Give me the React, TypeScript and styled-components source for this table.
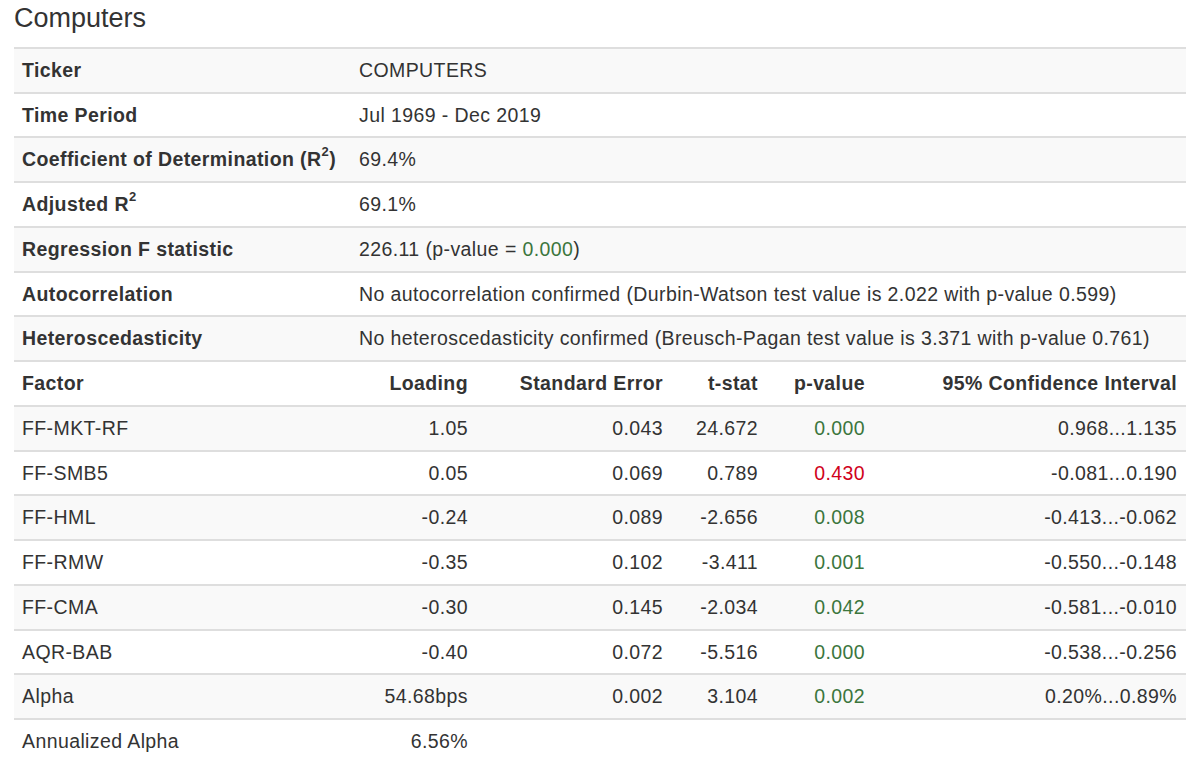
import React from "react";
import styled, { createGlobalStyle } from "styled-components";

const Global = createGlobalStyle`
  html, body { margin: 0; padding: 0; background: #fff; }
  body { font-family: "Liberation Sans", Arial, Helvetica, sans-serif; color: #333; }
`;

const Page = styled.div`
  padding: 0 14px;
  width: 1172px;
`;

const Title = styled.h3`
  margin: 0 0 11px;
  font-size: 27px;
  line-height: 36px;
  font-weight: 400;
  color: #333;
`;

const Table = styled.table`
  width: 1172px;
  border-collapse: collapse;
  table-layout: fixed;
  font-size: 19.5px;
  letter-spacing: 0.4px;
`;

const Row = styled.tr<{ $striped?: boolean }>`
  background: ${(p) => (p.$striped ? "#f9f9f9" : "#fff")};
  border-top: 2px solid #dedede;
`;

const Cell = styled.td<{ $align?: "left" | "right"; $bold?: boolean }>`
  padding: 10px 9px 10px 8px;
  line-height: 22.73px;
  text-align: ${(p) => p.$align ?? "left"};
  font-weight: ${(p) => (p.$bold ? 700 : 400)};
  white-space: nowrap;
  vertical-align: top;
`;

const Sup = styled.sup`
  font-size: 13px;
  line-height: 0;
  position: relative;
  top: -3px;
`;

const Val = styled.span<{ $tone: "good" | "bad" }>`
  color: ${(p) => (p.$tone === "good" ? "#3c763d" : "#d0021b")};
`;

const summary: [React.ReactNode, React.ReactNode][] = [
  ["Ticker", "COMPUTERS"],
  ["Time Period", "Jul 1969 - Dec 2019"],
  [
    <>
      Coefficient of Determination (R<Sup>2</Sup>)
    </>,
    "69.4%",
  ],
  [
    <>
      Adjusted R<Sup>2</Sup>
    </>,
    "69.1%",
  ],
  [
    "Regression F statistic",
    <>
      226.11 (p-value = <Val $tone="good">0.000</Val>)
    </>,
  ],
  [
    "Autocorrelation",
    "No autocorrelation confirmed (Durbin-Watson test value is 2.022 with p-value 0.599)",
  ],
  [
    "Heteroscedasticity",
    "No heteroscedasticity confirmed (Breusch-Pagan test value is 3.371 with p-value 0.761)",
  ],
];

type Factor = {
  name: string;
  loading: string;
  se: string;
  t: string;
  p: string;
  sig: boolean;
  ci: string;
};

const factors: Factor[] = [
  { name: "FF-MKT-RF", loading: "1.05", se: "0.043", t: "24.672", p: "0.000", sig: true, ci: "0.968...1.135" },
  { name: "FF-SMB5", loading: "0.05", se: "0.069", t: "0.789", p: "0.430", sig: false, ci: "-0.081...0.190" },
  { name: "FF-HML", loading: "-0.24", se: "0.089", t: "-2.656", p: "0.008", sig: true, ci: "-0.413...-0.062" },
  { name: "FF-RMW", loading: "-0.35", se: "0.102", t: "-3.411", p: "0.001", sig: true, ci: "-0.550...-0.148" },
  { name: "FF-CMA", loading: "-0.30", se: "0.145", t: "-2.034", p: "0.042", sig: true, ci: "-0.581...-0.010" },
  { name: "AQR-BAB", loading: "-0.40", se: "0.072", t: "-5.516", p: "0.000", sig: true, ci: "-0.538...-0.256" },
  { name: "Alpha", loading: "54.68bps", se: "0.002", t: "3.104", p: "0.002", sig: true, ci: "0.20%...0.89%" },
];

const FactorCols = () => (
  <colgroup>
    <col style={{ width: 340 }} />
    <col style={{ width: 123 }} />
    <col style={{ width: 195 }} />
    <col style={{ width: 95 }} />
    <col style={{ width: 107 }} />
    <col style={{ width: 312 }} />
  </colgroup>
);

export default function App() {
  return (
    <>
      <Global />
      <Page>
        <Title>Computers</Title>
        <Table>
          <colgroup>
            <col style={{ width: 337 }} />
            <col />
          </colgroup>
          <tbody>
            {summary.map(([k, v], i) => (
              <Row key={i} $striped={i % 2 === 0}>
                <Cell $bold>{k}</Cell>
                <Cell>{v}</Cell>
              </Row>
            ))}
          </tbody>
        </Table>
        <Table>
          <FactorCols />
          <thead>
            <Row>
              <Cell as="th" $bold>Factor</Cell>
              <Cell as="th" $bold $align="right">Loading</Cell>
              <Cell as="th" $bold $align="right">Standard Error</Cell>
              <Cell as="th" $bold $align="right">t-stat</Cell>
              <Cell as="th" $bold $align="right">p-value</Cell>
              <Cell as="th" $bold $align="right">95% Confidence Interval</Cell>
            </Row>
          </thead>
          <tbody>
            {factors.map((f, i) => (
              <Row key={f.name} $striped={i % 2 === 0}>
                <Cell>{f.name}</Cell>
                <Cell $align="right">{f.loading}</Cell>
                <Cell $align="right">{f.se}</Cell>
                <Cell $align="right">{f.t}</Cell>
                <Cell $align="right">
                  <Val $tone={f.sig ? "good" : "bad"}>{f.p}</Val>
                </Cell>
                <Cell $align="right">{f.ci}</Cell>
              </Row>
            ))}
            <Row>
              <Cell>Annualized Alpha</Cell>
              <Cell $align="right">6.56%</Cell>
              <Cell />
              <Cell />
              <Cell />
              <Cell />
            </Row>
          </tbody>
        </Table>
      </Page>
    </>
  );
}
